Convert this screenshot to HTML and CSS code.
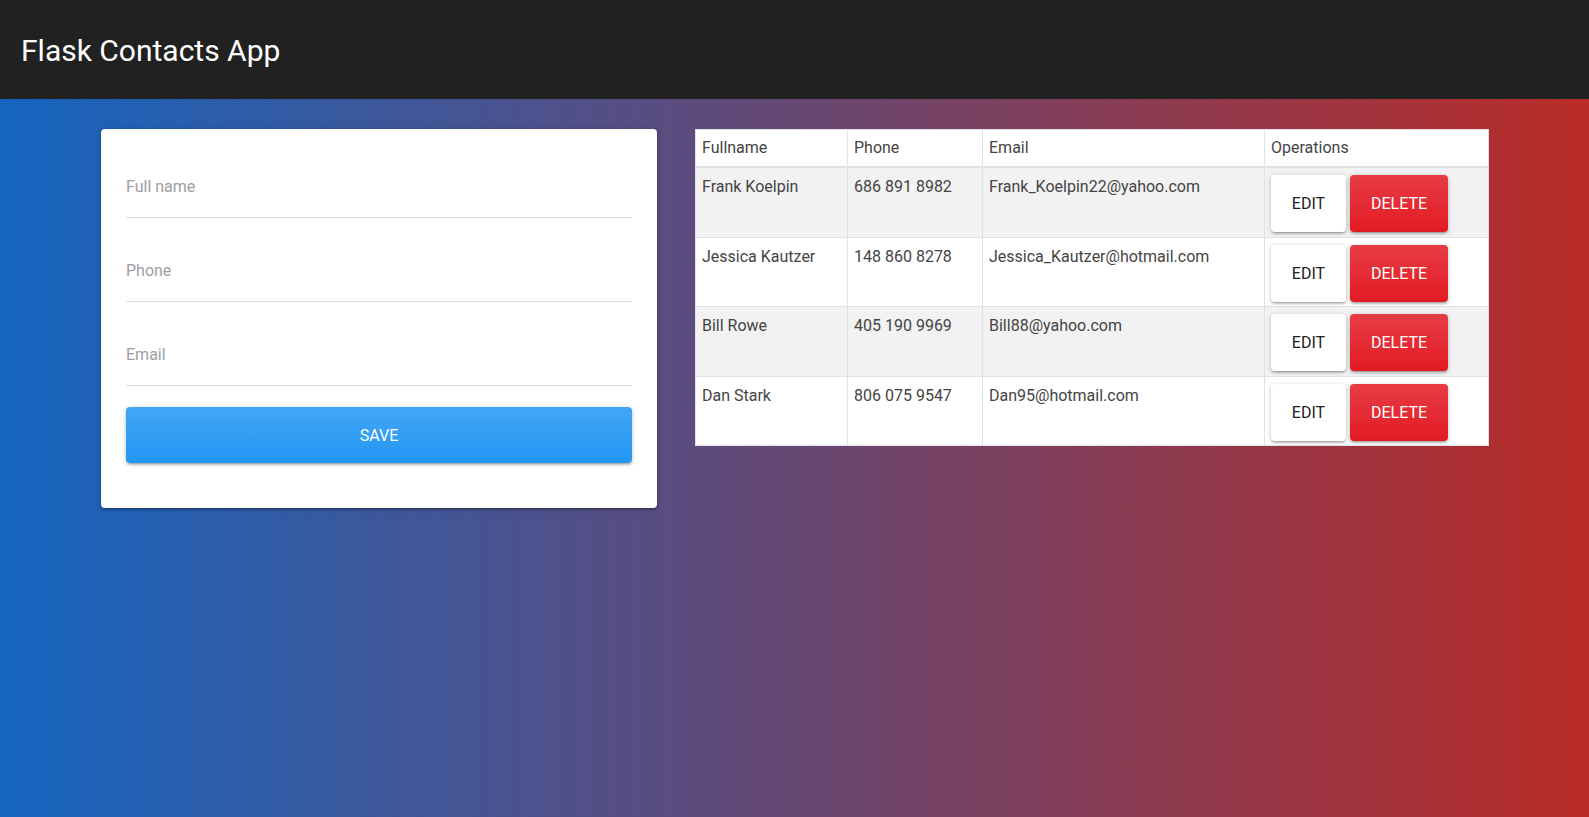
FILE: index.html
```html
<!DOCTYPE html>
<html lang="en">
<head>
<meta charset="utf-8">
<title>Flask Contacts App</title>
<link rel="stylesheet" href="styles.css">
</head>
<body>
<header class="navbar">
  <span class="brand">Flask Contacts App</span>
</header>
<main class="content">
  <section class="card">
    <form class="contact-form">
      <input class="field" type="text" placeholder="Full name">
      <input class="field" type="text" placeholder="Phone">
      <input class="field" type="text" placeholder="Email">
      <button type="button" class="btn btn-save">Save</button>
    </form>
  </section>
  <section class="table-wrap">
    <table class="contacts">
      <thead>
        <tr>
          <th class="col-name">Fullname</th>
          <th class="col-phone">Phone</th>
          <th class="col-email">Email</th>
          <th class="col-ops">Operations</th>
        </tr>
      </thead>
      <tbody>
        <tr>
          <td>Frank Koelpin</td>
          <td>686 891 8982</td>
          <td>Frank_Koelpin22@yahoo.com</td>
          <td class="ops"><button class="btn btn-edit">Edit</button><button class="btn btn-delete">Delete</button></td>
        </tr>
        <tr>
          <td>Jessica Kautzer</td>
          <td>148 860 8278</td>
          <td>Jessica_Kautzer@hotmail.com</td>
          <td class="ops"><button class="btn btn-edit">Edit</button><button class="btn btn-delete">Delete</button></td>
        </tr>
        <tr>
          <td>Bill Rowe</td>
          <td>405 190 9969</td>
          <td>Bill88@yahoo.com</td>
          <td class="ops"><button class="btn btn-edit">Edit</button><button class="btn btn-delete">Delete</button></td>
        </tr>
        <tr>
          <td>Dan Stark</td>
          <td>806 075 9547</td>
          <td>Dan95@hotmail.com</td>
          <td class="ops"><button class="btn btn-edit">Edit</button><button class="btn btn-delete">Delete</button></td>
        </tr>
      </tbody>
    </table>
  </section>
</main>
</body>
</html>
```

FILE: styles.css
```css
* {
  box-sizing: border-box;
}

html, body {
  margin: 0;
  padding: 0;
}

body {
  font-family: Roboto, "Liberation Sans", Arial, sans-serif;
  min-height: 100vh;
  background: linear-gradient(to right, #1565c0, #b92b27);
  display: flex;
  flex-direction: column;
}

.navbar {
  height: 99px;
  background: #212121;
  padding: 2px 0 0 21px;
  display: flex;
  align-items: center;
  flex-shrink: 0;
}

.brand {
  color: #fff;
  font-size: 30px;
  line-height: 36px;
}

.content {
  display: flex;
  align-items: flex-start;
  gap: 38px;
  padding: 30px 101px 0 101px;
}

.card {
  width: 556px;
  flex-shrink: 0;
  background: #fff;
  border-radius: 4px;
  box-shadow: 0 2px 2px rgba(0,0,0,0.14), 0 3px 1px -2px rgba(0,0,0,0.12), 0 1px 5px rgba(0,0,0,0.2);
  padding: 5px 25px 45px 25px;
}

.contact-form {
  display: flex;
  flex-direction: column;
}

.field {
  display: block;
  width: 100%;
  height: 84px;
  padding: 40px 0 19px 0;
  border: 0;
  border-bottom: 1px solid #ddd;
  outline: none;
  font-family: inherit;
  font-size: 16px;
  color: #444;
  background: transparent;
}

.field::placeholder {
  color: #9e9e9e;
  opacity: 1;
}

.btn {
  font-family: inherit;
  font-size: 16px;
  text-transform: uppercase;
  border: 0;
  border-radius: 4px;
  cursor: pointer;
  box-shadow: 0 2px 2px rgba(0,0,0,0.14), 0 3px 1px -2px rgba(0,0,0,0.12), 0 1px 5px rgba(0,0,0,0.2);
}

.btn-save {
  margin-top: 21px;
  height: 56px;
  width: 100%;
  color: #fff;
  background: linear-gradient(to bottom, #43a6f5, #2196f3);
}

.table-wrap {
  width: 793px;
  flex-shrink: 0;
}

.contacts {
  width: 100%;
  border-collapse: collapse;
  background: #fff;
  table-layout: fixed;
  color: #444;
  font-size: 16px;
  line-height: 24px;
}

.contacts th,
.contacts td {
  border: 1px solid #dee2e6;
  text-align: left;
  vertical-align: top;
  font-weight: 400;
}

.contacts th {
  padding: 6px 6px 6px 6px;
  border-bottom: 2px solid #dee2e6;
}

.contacts td {
  padding: 7px 6px 4.6px 6px;
}

.contacts tbody tr:nth-child(odd) {
  background: #f2f2f2;
}

.col-name { width: 152px; }
.col-phone { width: 135px; }
.col-email { width: 282px; }
.col-ops { width: 224px; }

.contacts td.ops {
  white-space: nowrap;
  font-size: 0;
  line-height: 0;
}

.ops .btn {
  height: 57px;
  line-height: 57px;
  vertical-align: top;
}

.btn-edit {
  width: 75px;
  padding: 0;
  background: #fff;
  color: #212121;
  margin-right: 4px;
}

.btn-delete {
  width: 98px;
  padding: 0;
  color: #fff;
  background: linear-gradient(to bottom, #e73c45, #e31b23);
}
```
